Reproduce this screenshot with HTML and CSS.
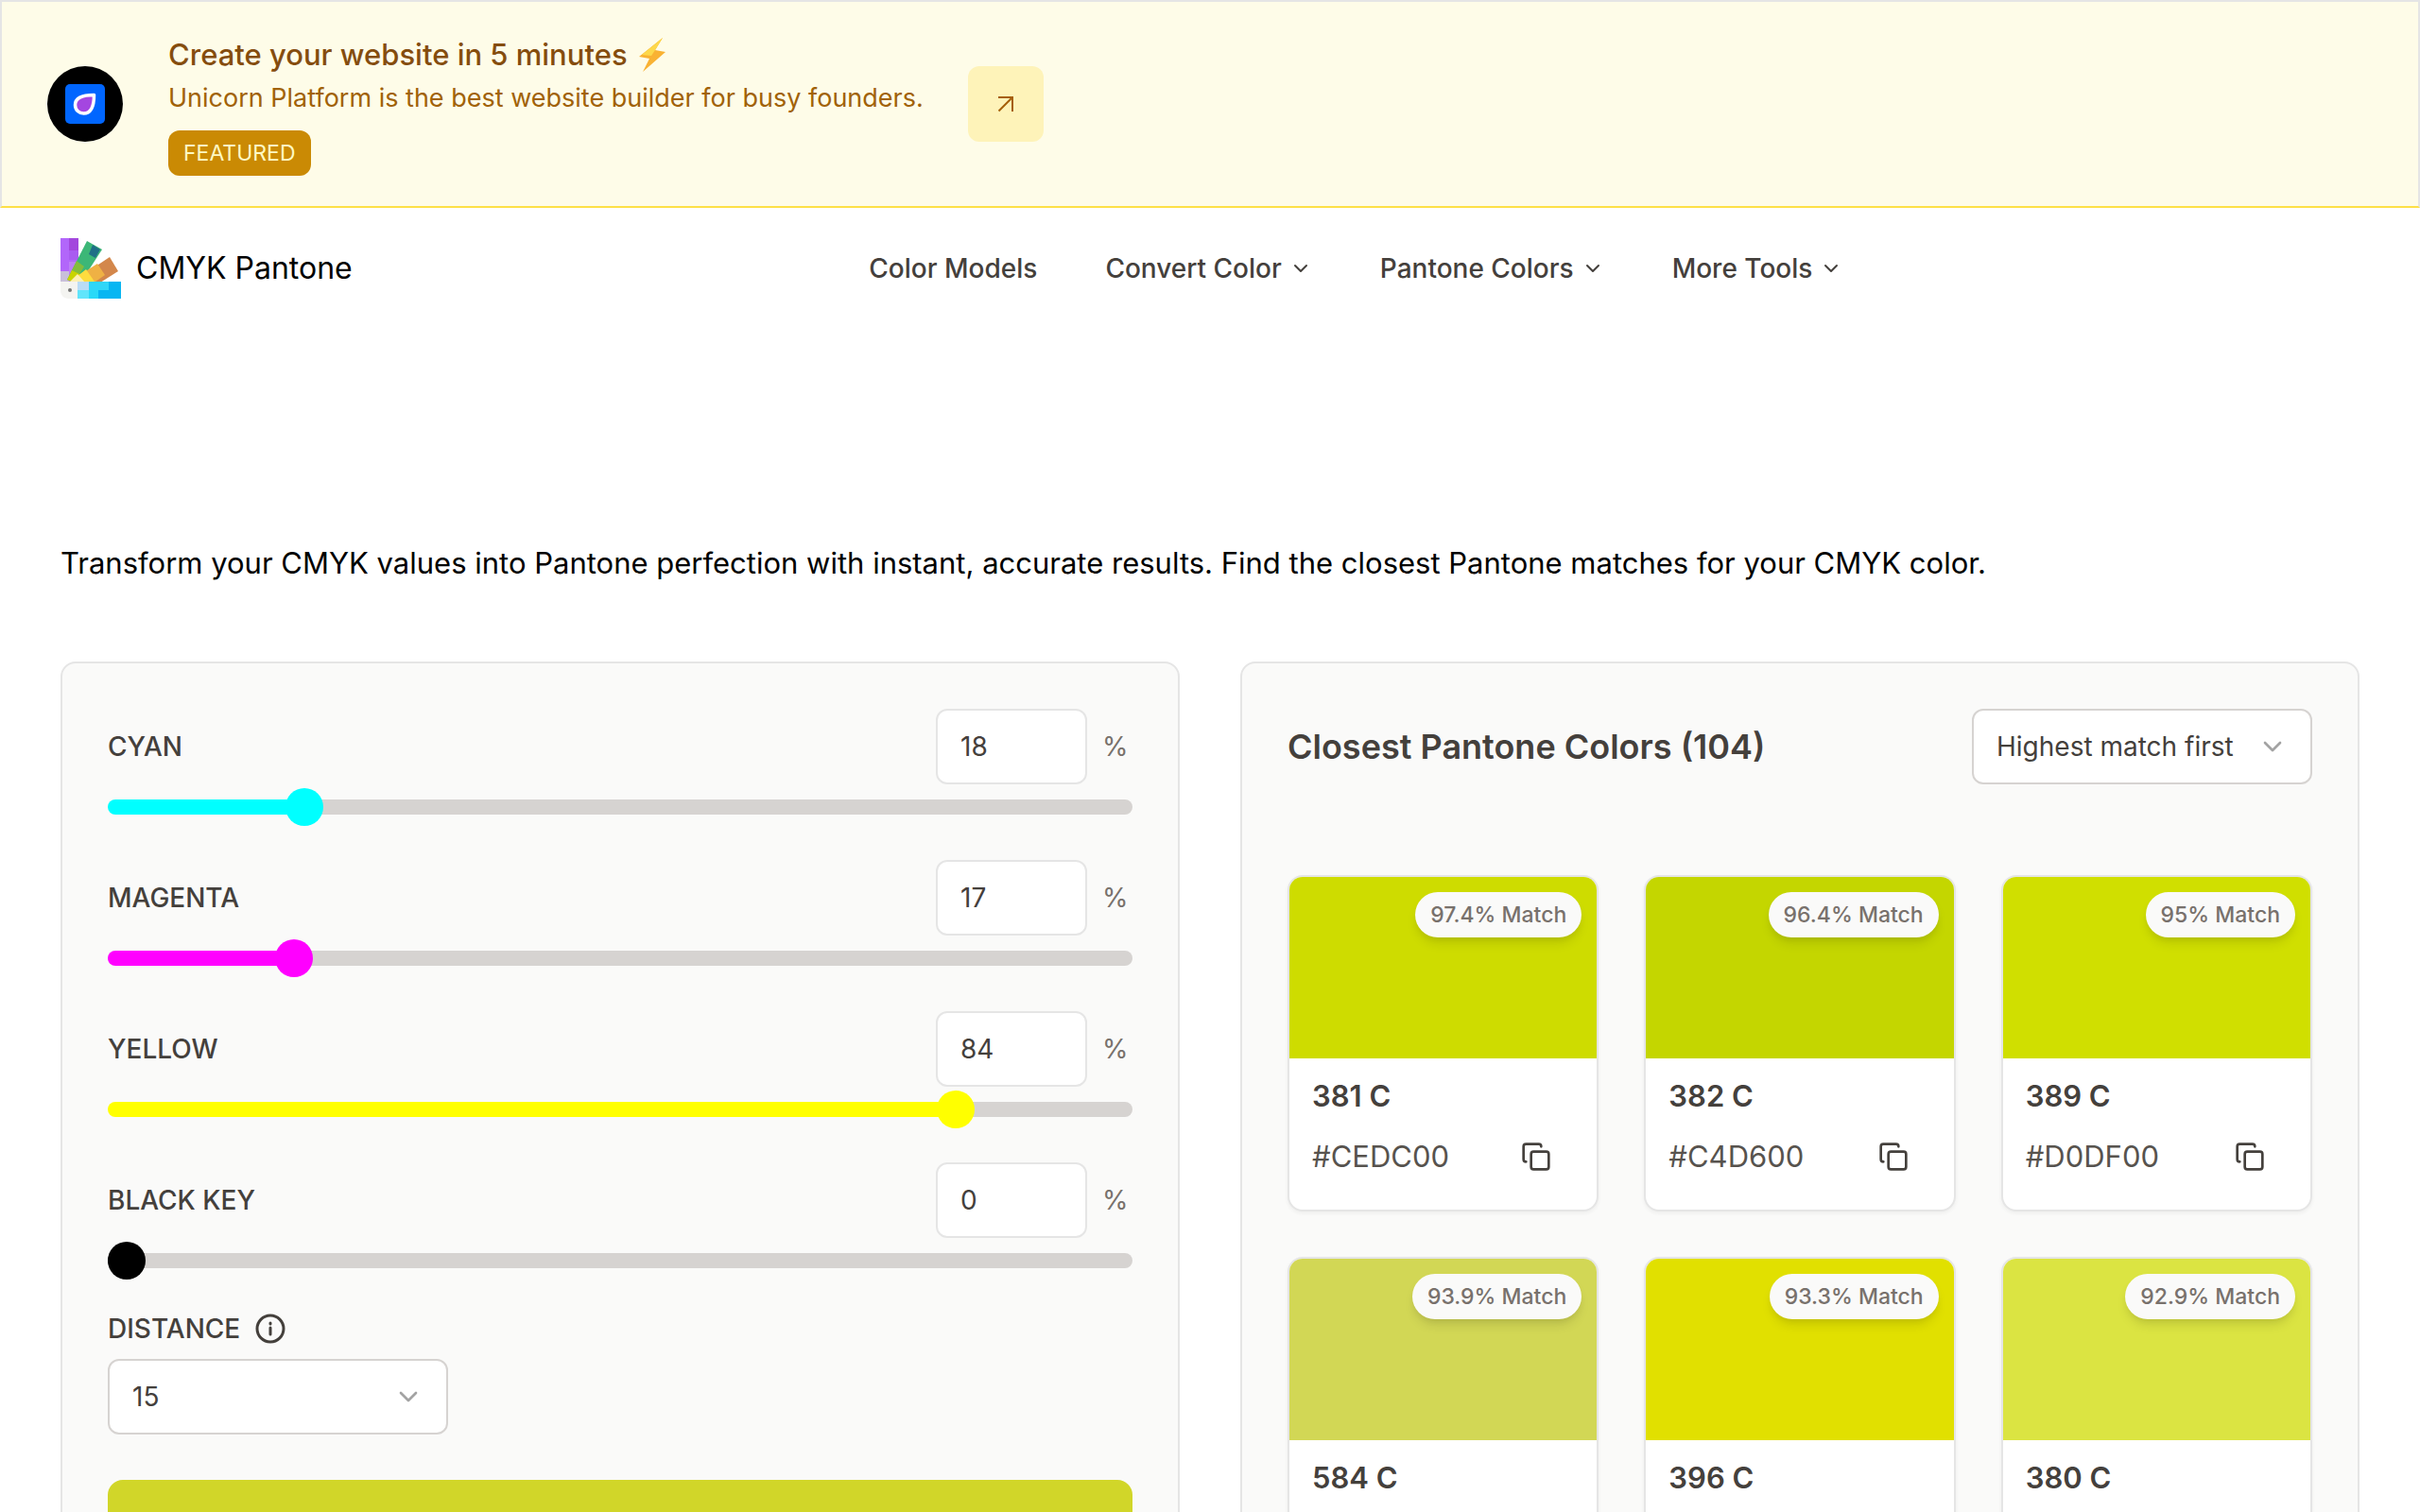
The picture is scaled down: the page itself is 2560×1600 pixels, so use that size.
FILE: index.html
```html
<!DOCTYPE html>
<html lang="en">
<head>
<meta charset="utf-8">
<meta name="viewport" content="width=device-width, initial-scale=1">
<title>CMYK Pantone</title>
<link rel="stylesheet" href="styles.css">
</head>
<body>
<svg class="sprite" aria-hidden="true">
  <symbol id="chevron" viewBox="0 0 24 24"><path d="m6 9 6 6 6-6"/></symbol>
  <symbol id="copy" viewBox="0 0 24 24"><rect x="8" y="8" width="14" height="14" rx="2"/><path d="M4 16c-1.1 0-2-.9-2-2V4c0-1.100.9-2 2-2h10c1.100 0 2 .9 2 2"/></symbol>
</svg>

<aside class="banner">
  <div class="banner-logo">
    <svg width="42" height="42" viewBox="0 0 42 42" aria-hidden="true">
      <rect width="42" height="42" rx="5" fill="#0066ff"/>
      <path d="M30.500 11.500C30.500 21 28.500 31 19.500 31c-5 0-9-3.500-9-9 0-8 9-10.500 20-10.500Z" fill="#a446e0" stroke="#fff" stroke-width="3.500"/>
    </svg>
  </div>
  <div class="banner-text">
    <p class="banner-title">Create your website in 5 minutes
      <svg width="28" height="36" viewBox="0 0 28 36" aria-hidden="true"><path d="M25 0 0 20l11 2L4 36 28 15l-11-2Z" fill="#f9b233"/><path d="M25 0 3 18l10 1 4-6Z" fill="#fdd84a"/></svg>
    </p>
    <p class="banner-sub">Unicorn Platform is the best website builder for busy founders.</p>
    <span class="tag">FEATURED</span>
  </div>
  <a class="banner-link" href="#" aria-label="Open Unicorn Platform">
    <svg class="arrow" width="32" height="32" viewBox="0 0 32 32" aria-hidden="true"><path d="M8 9h15v15M22 10 8.500 23.500"/></svg>
  </a>
</aside>

<header class="header">
  <a class="brand" href="#">
    <svg width="64" height="64" viewBox="0 0 64 64" aria-hidden="true">
      <path d="M0 0h19v46H0z" fill="#b266fa"/><path d="M9 0h10v13H9z" fill="#a347dd"/><path d="M9 13h10v10H9z" fill="#a95cf0"/><path d="M0 35h9v11H0z" fill="#c9bfda"/><path d="M9 25h10v21H9z" fill="#bd80f5"/>
      <path d="m28 3 16 9-24 37-13-5Z" fill="#3cb777"/><path d="m34 7 8 5-5 9-7-4Z" fill="#1f6f86"/><path d="m17 24 8 6-6 10-8-4Z" fill="#84bd3c"/><path d="m12 34 10 5-5 9-10-4Z" fill="#c9d400"/>
      <path d="m52 20 9 15-30 19-18-8Z" fill="#d3874b"/><path d="m39 27 8 12-17 12-8-13Z" fill="#efb144"/><path d="m27 33 9 13-14 6-9-8Z" fill="#ffdc3f"/><path d="m18 38 8 9-8 5-8-6Z" fill="#fff0b3"/>
      <path d="M18 46h46v18H18z" fill="#08b6f2"/><path d="M30 46h21v9H30z" fill="#30d6f8"/><path d="M18 46h12v9H18z" fill="#b9dcf6"/><path d="M18 55h12v9H18z" fill="#61e5fb"/><path d="M30 55h10v9H30z" fill="#2ad9f8"/>
      <path d="M0 46h18v18H9c-6 0-9-4-9-9Z" fill="#f4f4f1"/><circle cx="10" cy="55" r="2" fill="#777"/>
    </svg>
    <span>CMYK Pantone</span>
  </a>
  <nav class="nav">
    <a href="#">Color Models</a>
    <a href="#">Convert Color <svg width="24" height="24" aria-hidden="true"><use href="#chevron"/></svg></a>
    <a href="#">Pantone Colors <svg width="24" height="24" aria-hidden="true"><use href="#chevron"/></svg></a>
    <a href="#">More Tools <svg width="24" height="24" aria-hidden="true"><use href="#chevron"/></svg></a>
  </nav>
</header>

<main class="main">
  <p class="intro">Transform your CMYK values into Pantone perfection with instant, accurate results. Find the closest Pantone matches for your CMYK color.</p>

  <div class="columns">
    <form class="panel controls">
      <div class="channel">
        <div class="channel-head"><label for="c">CYAN</label><span class="amount"><input id="c" class="number" type="text" value="18"><span class="unit">%</span></span></div>
        <input class="slider cyan" type="range" aria-label="Cyan" value="18" style="--v:18">
      </div>
      <div class="channel">
        <div class="channel-head"><label for="m">MAGENTA</label><span class="amount"><input id="m" class="number" type="text" value="17"><span class="unit">%</span></span></div>
        <input class="slider magenta" type="range" aria-label="Magenta" value="17" style="--v:17">
      </div>
      <div class="channel">
        <div class="channel-head"><label for="y">YELLOW</label><span class="amount"><input id="y" class="number" type="text" value="84"><span class="unit">%</span></span></div>
        <input class="slider yellow" type="range" aria-label="Yellow" value="84" style="--v:84">
      </div>
      <div class="channel">
        <div class="channel-head"><label for="k">BLACK KEY</label><span class="amount"><input id="k" class="number" type="text" value="0"><span class="unit">%</span></span></div>
        <input class="slider black" type="range" aria-label="Black key" value="0" style="--v:0">
      </div>
      <div class="distance">
        <div class="distance-head">
          <label for="distance">DISTANCE</label>
          <svg width="32" height="32" viewBox="0 0 32 32" aria-hidden="true"><circle cx="16" cy="16" r="14"/><path d="M16 15v7M16 10v1"/></svg>
        </div>
        <div class="select">
          <select id="distance"><option>15</option></select>
          <svg width="32" height="32" aria-hidden="true"><use href="#chevron"/></svg>
        </div>
      </div>
      <button class="preview" type="button" aria-label="Copy selected color"></button>
    </form>

    <section class="panel results">
      <div class="results-head">
        <h2>Closest Pantone Colors (104)</h2>
        <div class="select">
          <select aria-label="Sort order"><option>Highest match first</option></select>
          <svg width="32" height="32" aria-hidden="true"><use href="#chevron"/></svg>
        </div>
      </div>
      <div class="swatches">
        <article class="card">
          <div class="swatch" style="background:#cedc00"><span class="match">97.4% Match</span></div>
          <div class="card-body"><h3>381 C</h3><div class="hex"><span>#CEDC00</span><button type="button" aria-label="Copy #CEDC00"><svg width="32" height="32" aria-hidden="true"><use href="#copy"/></svg></button></div></div>
        </article>
        <article class="card">
          <div class="swatch" style="background:#c4d600"><span class="match">96.4% Match</span></div>
          <div class="card-body"><h3>382 C</h3><div class="hex"><span>#C4D600</span><button type="button" aria-label="Copy #C4D600"><svg width="32" height="32" aria-hidden="true"><use href="#copy"/></svg></button></div></div>
        </article>
        <article class="card">
          <div class="swatch" style="background:#d0df00"><span class="match">95% Match</span></div>
          <div class="card-body"><h3>389 C</h3><div class="hex"><span>#D0DF00</span><button type="button" aria-label="Copy #D0DF00"><svg width="32" height="32" aria-hidden="true"><use href="#copy"/></svg></button></div></div>
        </article>
        <article class="card">
          <div class="swatch" style="background:#d2d755"><span class="match">93.9% Match</span></div>
          <div class="card-body"><h3>584 C</h3><div class="hex"><span>#D2D755</span><button type="button" aria-label="Copy #D2D755"><svg width="32" height="32" aria-hidden="true"><use href="#copy"/></svg></button></div></div>
        </article>
        <article class="card">
          <div class="swatch" style="background:#e1e000"><span class="match">93.3% Match</span></div>
          <div class="card-body"><h3>396 C</h3><div class="hex"><span>#E1E000</span><button type="button" aria-label="Copy #E1E000"><svg width="32" height="32" aria-hidden="true"><use href="#copy"/></svg></button></div></div>
        </article>
        <article class="card">
          <div class="swatch" style="background:#dbe442"><span class="match">92.9% Match</span></div>
          <div class="card-body"><h3>380 C</h3><div class="hex"><span>#DBE442</span><button type="button" aria-label="Copy #DBE442"><svg width="32" height="32" aria-hidden="true"><use href="#copy"/></svg></button></div></div>
        </article>
      </div>
    </section>
  </div>
</main>
</body>
</html>
```
FILE: styles.css
```css
* { box-sizing: border-box; }

html { overflow-x: hidden; scrollbar-width: none; }

body {
  margin: 0;
  background: #fff;
  color: #44403c;
  font-family: Inter, "Liberation Sans", sans-serif;
  font-size: 28px;
  line-height: 40px;
}

p, h2, h3 { margin: 0; }
a { color: inherit; text-decoration: none; }
input, select, button { margin: 0; font: inherit; color: inherit; }
svg { flex: none; fill: none; stroke: currentColor; stroke-width: 2; stroke-linecap: round; stroke-linejoin: round; }
.banner-logo svg, .banner-title svg, .brand svg { stroke: none; }
.sprite { display: none; }

/* Promo banner */
.banner {
  display: flex;
  align-items: center;
  padding: 32px 48px;
  border: 2px solid #e5e5e5;
  border-bottom-color: #fde047;
  background: #fefce8;
}
.banner-logo {
  display: grid;
  place-items: center;
  width: 80px;
  height: 80px;
  margin-right: 48px;
  border-radius: 50%;
  background: #000;
}
.banner-text { min-width: 814px; }
.banner-title {
  display: flex;
  align-items: center;
  gap: 12px;
  font-size: 31px;
  font-weight: 500;
  line-height: 48px;
  color: #854d0e;
}
.banner-sub { font-size: 27px; line-height: 44px; color: #a16207; }
.tag {
  display: block;
  width: fit-content;
  margin-top: 12px;
  padding: 0 16px;
  border-radius: 12px;
  background: #ca8a04;
  color: #fef9c3;
  font-size: 23px;
  line-height: 48px;
}
.banner-link {
  display: grid;
  place-items: center;
  width: 80px;
  height: 80px;
  margin-left: 32px;
  border-radius: 12px;
  background: #fef3b9;
  color: #a65f0a;
}
.arrow { stroke-linecap: butt; stroke-linejoin: miter; }

/* Site header */
.header { display: flex; align-items: center; padding: 32px 64px; }
.brand { display: flex; align-items: center; gap: 16px; color: #000; font-size: 32px; }
.nav { display: flex; gap: 72px; margin: 0 auto; font-weight: 500; }
.nav a { display: flex; align-items: center; gap: 8px; }

/* Converter */
.main { padding: 228px 64px 64px; }
.intro { color: #000; font-size: 31px; }
.columns { display: grid; grid-template-columns: 1fr 1fr; gap: 64px; margin-top: 84px; }
.panel { padding: 48px; border: 2px solid #e5e5e5; border-radius: 16px; background: #fafaf9; }

.controls { display: flex; flex-direction: column; gap: 36px; }
.channel { display: flex; flex-direction: column; gap: 4px; }
.channel-head { display: flex; align-items: center; justify-content: space-between; font-weight: 500; }
.amount { display: flex; align-items: center; gap: 16px; font-weight: 400; }
.unit { width: 32px; color: #78716c; }
.number {
  width: 160px;
  height: 80px;
  padding: 0 24px;
  border: 2px solid #e5e5e5;
  border-radius: 12px;
  background: #fff;
}

.slider {
  appearance: none;
  display: block;
  width: 100%;
  height: 40px;
  background: none;
}
.slider::-webkit-slider-runnable-track {
  height: 16px;
  border-radius: 8px;
  background: linear-gradient(to right, var(--ink) calc(20px + (100% - 40px) * var(--v) / 100), #d6d3d1 0);
}
.slider::-webkit-slider-thumb {
  appearance: none;
  width: 40px;
  height: 40px;
  margin-top: -12px;
  border-radius: 50%;
  background: var(--ink);
}
.cyan { --ink: #0ff; }
.magenta { --ink: #f0f; }
.yellow { --ink: #ff0; }
.black { --ink: #000; }

.distance { margin-top: -16px; padding-bottom: 12px; }
.distance-head { display: flex; align-items: center; gap: 16px; height: 64px; font-weight: 500; }
.distance-head svg { stroke-width: 3; }

.select { display: grid; align-items: center; width: 360px; }
.select select {
  grid-area: 1 / 1;
  appearance: none;
  width: 100%;
  height: 80px;
  padding: 0 24px;
  border: 2px solid #d6d3d1;
  border-radius: 12px;
  background: #fff;
}
.select svg { grid-area: 1 / 1; justify-self: end; margin-right: 26px; color: #a3a3a3; pointer-events: none; }

.preview { height: 128px; border: 0; border-radius: 16px; background: #d1d629; }

/* Results */
.results-head { display: flex; align-items: center; justify-content: space-between; }
.results-head h2 { font-size: 36px; font-weight: 600; }
.swatches { display: grid; grid-template-columns: repeat(3, 1fr); gap: 48px; margin-top: 96px; }
.card { overflow: hidden; border: 2px solid #e5e5e5; border-radius: 16px; background: #fff; box-shadow: 0 2px 4px rgb(0 0 0 / 5%); }
.swatch { display: flex; justify-content: flex-end; align-items: flex-start; height: 192px; padding: 16px; }
.match {
  padding: 0 16px;
  border-radius: 24px;
  background: #fafaf9;
  box-shadow: 0 8px 12px -2px rgb(0 0 0 / 10%), 0 4px 8px -4px rgb(0 0 0 / 10%);
  color: #78716c;
  font-size: 23px;
  font-weight: 500;
  line-height: 48px;
}
.card-body { padding: 20px 24px 12px; }
.card-body h3 { font-size: 31px; font-weight: 600; }
.hex { display: flex; align-items: center; justify-content: space-between; height: 88px; padding-right: 24px; color: #57534e; font-size: 31px; }
.hex button { display: grid; padding: 0; border: 0; background: none; color: #44403c; }
```
